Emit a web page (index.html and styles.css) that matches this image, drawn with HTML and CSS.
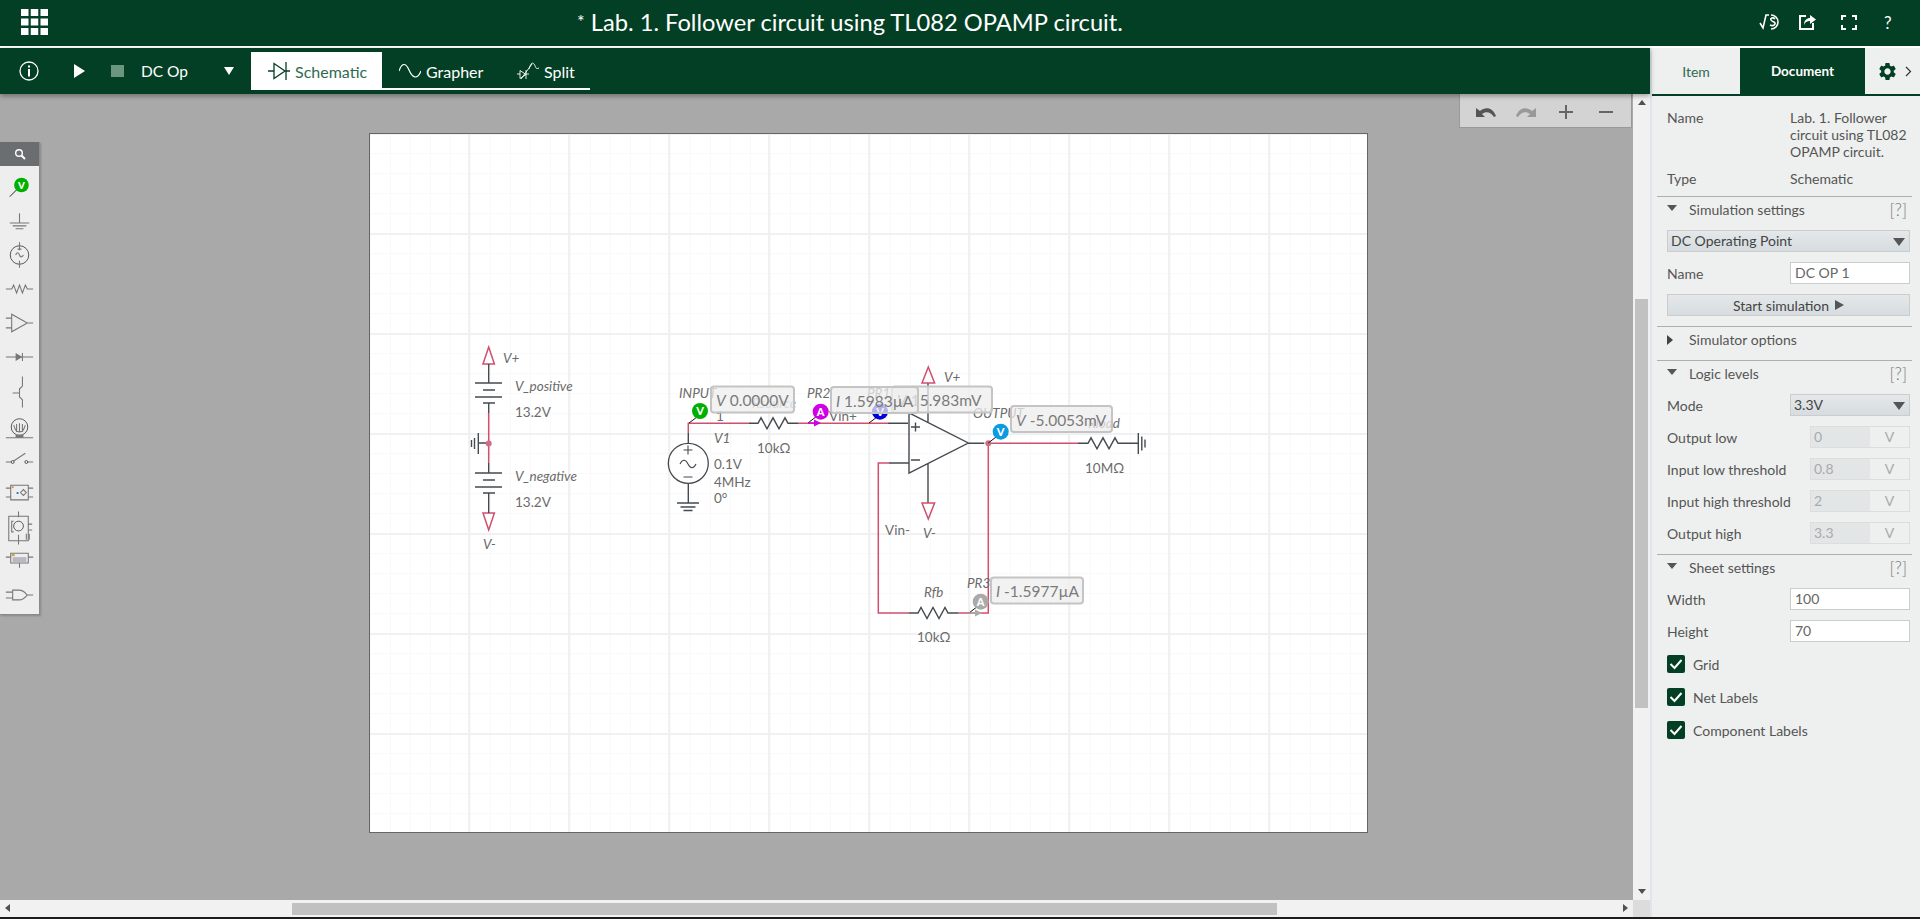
FILE: index.html
```html
<!DOCTYPE html>
<html lang="en">
<head>
<meta charset="utf-8">
<title>Lab. 1. Follower circuit using TL082 OPAMP circuit.</title>
<link rel="stylesheet" href="styles.css">
</head>
<body>
<div class="app">
  <header class="topbar">
    <svg class="apps" width="27" height="26" viewBox="0 0 27 26"><path fill="#fff" d="M0 0h7.500v7H0zM9.750 0h7.500v7h-7.500zM19.500 0H27v7h-7.500zM0 9.500h7.500v7H0zM9.750 9.500h7.500v7h-7.500zM19.500 9.500H27v7h-7.500zM0 19h7.500v7H0zM9.750 19h7.500v7h-7.500zM19.500 19H27v7h-7.500z"/></svg>
    <h1 class="title"><span class="star">*</span> Lab. 1. Follower circuit using TL082 OPAMP circuit.</h1>
    <div class="top-actions">
      <svg width="24" height="18" viewBox="0 0 24 18"><path class="ic-thin" d="M1 10l3 5 3-13h3"/><path class="ic-thin" d="M12 2a7 7 0 1 1 0 14M16 6c-2-2-5-1-4 1s5 2 4 4-3 2-5 1"/></svg>
      <svg width="17" height="16" viewBox="0 0 17 16"><path class="ic-line" d="M7 2H1v13h13V9"/><path fill="#fff" d="M5 11c0-5 3-7 6-7V1l6 4.500-6 4.500V7c-3 0-5 1-6 4z"/></svg>
      <svg width="16" height="15" viewBox="0 0 16 15"><path class="ic-line" d="M1 5V1h4M11 1h4v4M15 10v4h-4M5 14H1v-4"/></svg>
      <span class="help">?</span>
    </div>
  </header>
  <div class="body-row">
    <div class="left-col">
      <nav class="toolbar">
        <svg class="info" width="20" height="20" viewBox="0 0 20 20"><circle cx="10" cy="10" r="9" fill="none" stroke="#fff" stroke-width="1.300"/><path fill="#fff" d="M9 4.500h2v2H9zM9 8h2v7.500H9z"/></svg>
        <span class="play"></span>
        <span class="stop"></span>
        <span class="sim-name">DC Op</span>
        <span class="sim-drop"></span>
        <div class="tabs">
          <a class="tab active">
            <svg width="22" height="18" viewBox="0 0 22 18"><path fill="none" stroke="#033f24" stroke-width="1.300" d="M0 9h6M6 1.500l11 7.500-11 7.500zM18 0v18M18 9h4"/></svg>
            Schematic</a>
          <a class="tab grapher">
            <svg width="22" height="18" viewBox="0 0 22 18"><path fill="none" stroke="#fff" stroke-width="1.200" d="M0 9C3 0 7 1 10 8s8 11 12 1"/></svg>
            Grapher</a>
          <a class="tab split">
            <svg width="23" height="20" viewBox="0 0 23 20"><path fill="none" stroke="#fff" stroke-width=".9" d="M0 13h3M3 9.500l6 4-6 4zM9 9v9M9 13h3M4 18L15 3M12 8c2-6 3-7 5-5s1 6 5 4"/></svg>
            Split</a>
        </div>
      </nav>
      <div class="workspace">
        <main class="canvas">
          <div class="palette">
            <div class="palette-search">
              <svg width="12" height="12" viewBox="0 0 12 12"><circle cx="5" cy="5" r="3.300" fill="none" stroke="#fff" stroke-width="1.400"/><path stroke="#fff" stroke-width="2" d="M7.500 7.500L11 11"/></svg>
            </div>
            <svg class="pal-icon h36" viewBox="0 0 40 36"><path stroke="#222" d="M10 31l7-7"/><circle cx="22" cy="19" r="7.500" fill="#00b000"/><text class="pal-v" x="22" y="23">V</text></svg>
            <svg class="pal-icon h36" viewBox="0 0 40 36"><path class="pl" d="M20 11v10M10 21h20M13 24h14M16 27h8"/></svg>
            <svg class="pal-icon h34" viewBox="0 0 40 34"><circle class="pl2" cx="20" cy="17" r="9.500"/><path class="pl" d="M20 4v8M20 23v7M16 17c1.500-3 3-3 4 0s3 2 4 0M18 11h4"/></svg>
            <svg class="pal-icon h34" viewBox="0 0 40 34"><path class="pl" d="M6 17h6l2-4 3 8 3-8 3 8 3-8 2 4h6"/></svg>
            <svg class="pal-icon h34" viewBox="0 0 40 34"><path class="pl" d="M12 8v18l16-9zM6 12h6M6 22h6M28 17h6"/></svg>
            <svg class="pal-icon h34" viewBox="0 0 40 34"><path class="pl" d="M6 17h28M23 13v8"/><path fill="#777" d="M16 13l7 4-7 4z"/></svg>
            <svg class="pal-icon h36" viewBox="0 0 40 36"><path class="pl" d="M23 2v10l-3 3v8l3 3v8M20 14v10M13 19h7"/></svg>
            <svg class="pal-icon h36" viewBox="0 0 40 36"><circle class="pl2" cx="20" cy="17" r="8.500"/><path class="pl" d="M6 28h28M14 15c2 6 3 7 6 7s4-1 6-7M17 14v8M20 13v9M23 14v8"/><path fill="#777" d="M16 25h8v3h-8z"/></svg>
            <svg class="pal-icon h32" viewBox="0 0 40 32"><path class="pl" d="M6 16h6M28 16h6M14 15l12-8"/><circle class="pl2" cx="13" cy="16" r="1.500"/><circle class="pl2" cx="27" cy="16" r="1.500"/></svg>
            <svg class="pal-icon h32" viewBox="0 0 40 32"><path class="pl" d="M6 10h5M6 19h5M29 10h5M29 19h5M11 7h18v15H11zM21 14.500l3-3 3 3-3 3z"/><path fill="#c93" d="M12 8h2v2h-2z"/><path fill="#37c" d="M17 14h2v2h-2z"/></svg>
            <svg class="pal-icon h36" viewBox="0 0 40 36"><path class="pl" d="M9 6h20v25H9zM19 1v6M19 25v10M29 14h4M29 20h4M14 11h-2v11h2"/><circle class="pl2" cx="19" cy="16" r="5"/><path class="pl" d="M27 24v6M30 24v6"/></svg>
            <svg class="pal-icon h30" viewBox="0 0 40 30"><path class="pl" d="M6 11h5M29 11h5M11 7h18v10H11zM20 17v5"/><path fill="#b9b9c4" d="M13 11h14v5H13z"/><path fill="#c93" d="M12 8h3v2h-3z"/></svg>
            <svg class="pal-icon h40" viewBox="0 0 40 40"><path class="pl" d="M6 16h7M6 22h7M13 14v10h7c4 0 6-3 8-5-2-2-4-5-8-5zM28 19h6"/></svg>
          </div>
          <div class="edit-tools">
            <svg width="20" height="12" viewBox="0 0 20 12"><path fill="#555" d="M0 2v9h9L6 8c4-3 9-2 12 3l2-1C17 2 10 0 4 5z"/></svg>
            <svg width="20" height="12" viewBox="0 0 20 12"><path fill="#999" d="M20 2v9h-9l3-3C10 5 5 6 2 11l-2-1C3 2 10 0 16 5z"/></svg>
            <svg width="14" height="14" viewBox="0 0 14 14"><path fill="#666" d="M6 0h2v6h6v2H8v6H6V8H0V6h6z"/></svg>
            <svg width="14" height="14" viewBox="0 0 14 14"><path fill="#666" d="M0 6h14v2H0z"/></svg>
          </div>
          <div class="sheet">
            <svg class="schem" width="996" height="698" viewBox="370 134 996 698">
              <!-- supply -->
              <path class="red" d="M483 364l5.700-17 5.700 17zM488.700 413v50M483 513l5.700 17 5.700-17z"/>
              <path class="dk" d="M488.700 364v19M475 383h27M483 390h12M475 397h27M483 403h12M488.700 403v10M488.700 443h-10M478.300 433v21M474.500 438v11M471.500 440v7M488.700 463v10M475 473h27M483 480h12M475 487h27M483 493h12M488.700 493v20"/>
              <circle class="node" cx="488.700" cy="443.500" r="3"/>
              <text class="lb it" x="503" y="363">V+</text>
              <text class="lb it" x="515" y="391">V_positive</text>
              <text class="lb" x="515" y="417">13.2V</text>
              <text class="lb it" x="515" y="481">V_negative</text>
              <text class="lb" x="515" y="507">13.2V</text>
              <text class="lb it" x="483" y="549">V-</text>
              <!-- source -->
              <path class="red" d="M688.300 433v-9.700H749M798 423.300h90M889 463h-10.700v150H909M958 613h30.300V443.300H1078"/>
              <path class="dk" d="M688.300 433v10M688.300 483v20M677 503h22M680.500 507h15M683.500 510.500h9M749 423.300h9l3-5.500 6 11 6-11 6 11 6-11 3 5.500h10M888 423.300h20M909 413v60l59.300-30zM889 463h20M968.300 443.300h16M1078 443.300h10l3-5.500 6 11 6-11 6 11 6-11 3 5.500h10M1128 443.300h10M1138.300 433v21M1141.800 436.500v14M1145 439.500v8M909 613h9l3-5.500 6 11 6-11 6 11 6-11 3 5.500h10M928 383v40M928 463v40M911 427h9M915.500 422.500v9M911 460h9"/>
              <circle class="wirecirc" cx="688.300" cy="463.300" r="20"/>
              <path class="dkthin" d="M683.500 450h9M688 445.500v9M683.500 477h9M680 464c2.500-5 5.500-5 8 0s5.500 5 8 0"/>
              <path class="red" d="M922 383l6.300-16 6.300 16zM922 503l6.300 16 6.300-16z"/>
              <circle class="node" cx="988.300" cy="443.300" r="3"/>
              <!-- labels -->
              <text class="lb it" x="679" y="398">INPUT</text>
              <text class="lb faint it" x="752" y="408">Rsource</text>
              <text class="lb" x="716" y="421">1</text>
              <text class="lb it" x="714" y="443">V1</text>
              <text class="lb" x="714" y="469">0.1V</text>
              <text class="lb" x="714" y="487">4MHz</text>
              <text class="lb" x="714" y="503">0°</text>
              <text class="lb" x="757" y="453">10kΩ</text>
              <text class="lb it" x="807" y="398">PR2</text>
              <text class="lb" x="829" y="421">Vin+</text>
              <text class="lb it" x="867" y="398">PR1</text>
              <text class="lb it" x="944" y="382">V+</text>
              <text class="lb it" x="923" y="538">V-</text>
              <text class="lb" x="885" y="535">Vin-</text>
              <text class="lb it" x="973" y="418">OUTPUT</text>
              <text class="lb it" x="1088" y="428">Rload</text>
              <text class="lb" x="1085" y="473">10MΩ</text>
              <text class="lb it" x="967" y="588">PR3</text>
              <text class="lb it" x="924" y="597">Rfb</text>
              <text class="lb" x="917" y="642">10kΩ</text>
              <!-- probes -->
              <path class="stem" d="M689 423l8-6M808 423l9-7M869 423l8-6M988.300 443l9-7M969 613l9-7"/>
              <path class="arrow-m" d="M808 423h8"/><path class="arrow-mf" d="M814 419.500l7 3.500-7 3.500z"/>
              <path class="arrow-g" d="M969 613h8"/><path class="arrow-gf" d="M975 609.500l7 3.500-7 3.500z"/>
              <circle class="p-green" cx="700" cy="411" r="8"/><text class="pv" x="700" y="415">V</text>
              <circle class="p-mag" cx="820.700" cy="411.700" r="8"/><text class="pv" x="820.700" y="416">A</text>
              <circle class="p-blue" cx="880" cy="411.700" r="8"/><text class="pv" x="880" y="416">V</text>
              <circle class="p-sky" cx="1000.700" cy="431.700" r="8"/><text class="pv" x="1000.700" y="436">V</text>
              <circle class="p-gray" cx="980.700" cy="601.700" r="8"/><text class="pv" x="980.700" y="606">A</text>
              <!-- value boxes -->
              <rect class="vbox" x="711" y="386.500" width="83" height="26" rx="3"/>
              <text class="vt" x="716" y="406"><tspan class="it">V</tspan> 0.0000V</text>
              <rect class="vbox" x="892" y="386.500" width="100" height="26" rx="3"/>
              <text class="vt" x="897" y="406"><tspan class="it">V</tspan> 15.983mV</text>
              <rect class="vbox" x="831" y="387" width="87" height="26" rx="3"/>
              <text class="vt" x="836" y="407"><tspan class="it">I</tspan> 1.5983µA</text>
              <rect class="vbox" x="1011" y="406" width="101" height="26" rx="3"/>
              <text class="vt" x="1016" y="426"><tspan class="it">V</tspan> -5.0053mV</text>
              <rect class="vbox" x="991" y="577.500" width="92" height="26" rx="3"/>
              <text class="vt" x="996" y="597"><tspan class="it">I</tspan> -1.5977µA</text>
            </svg>
          </div>
        </main>
        <div class="vscroll">
          <span class="arr up"></span>
          <span class="vthumb"></span>
          <span class="arr down"></span>
        </div>
        <div class="hscroll">
          <span class="arr left"></span>
          <span class="hthumb"></span>
          <span class="arr right"></span>
        </div>
        <div class="corner"></div>
      </div>
    </div>
    <aside class="panel">
      <div class="panel-tabs">
        <a class="ptab item">Item</a>
        <a class="ptab doc">Document</a>
        <div class="ptab-tools">
          <svg width="21" height="21" viewBox="0 0 24 24"><path fill="#033f24" d="M19.140 12.940c.04-.3.06-.61.06-.94 0-.32-.02-.64-.07-.94l2.030-1.580a.49.49 0 0 0 .12-.61l-1.920-3.320a.488.488 0 0 0-.59-.22l-2.390.96c-.5-.38-1.030-.7-1.620-.94l-.36-2.540a.484.484 0 0 0-.48-.41h-3.840c-.24 0-.43.17-.47.41l-.36 2.540c-.59.24-1.130.57-1.620.94l-2.390-.96c-.22-.08-.47 0-.59.22L2.740 8.870c-.12.21-.08.47.12.61l2.030 1.580c-.05.3-.09.63-.09.94s.02.64.07.94l-2.030 1.580a.49.49 0 0 0-.12.61l1.920 3.320c.12.22.37.29.59.22l2.390-.96c.5.38 1.030.7 1.620.94l.36 2.540c.05.24.24.41.48.41h3.840c.24 0 .44-.17.47-.41l.36-2.540c.59-.24 1.130-.56 1.620-.94l2.390.96c.22.08.47 0 .59-.22l1.920-3.320c.12-.22.07-.47-.12-.61l-2.010-1.580zM12 15.600c-1.980 0-3.600-1.620-3.600-3.600s1.620-3.600 3.600-3.600 3.600 1.620 3.600 3.600-1.620 3.600-3.600 3.600z"/></svg>
          <svg width="7" height="11" viewBox="0 0 7 11"><path fill="none" stroke="#333" stroke-width="1.200" d="M1 1l4.500 4.500L1 10"/></svg>
        </div>
      </div>
      <div class="panel-body">
        <dl class="meta">
          <dt>Name</dt><dd>Lab. 1. Follower circuit using TL082 OPAMP circuit.</dd>
          <dt>Type</dt><dd>Schematic</dd>
        </dl>
        <section class="sec">
          <h2 class="sec-head"><span class="tri-down"></span>Simulation settings<span class="hint">[?]</span></h2>
          <div class="select wide">DC Operating Point<span class="sel-arrow"></span></div>
          <div class="row"><label>Name</label><div class="input">DC OP 1</div></div>
          <div class="btn">Start simulation<span class="btn-play"></span></div>
        </section>
        <section class="sec">
          <h2 class="sec-head"><span class="tri-right"></span>Simulator options</h2>
        </section>
        <section class="sec">
          <h2 class="sec-head"><span class="tri-down"></span>Logic levels<span class="hint">[?]</span></h2>
          <div class="row"><label>Mode</label><div class="select">3.3V<span class="sel-arrow"></span></div></div>
          <div class="row"><label>Output low</label><div class="unit"><span class="uv">0</span><span class="uu">V</span></div></div>
          <div class="row"><label>Input low threshold</label><div class="unit"><span class="uv">0.8</span><span class="uu">V</span></div></div>
          <div class="row"><label>Input high threshold</label><div class="unit"><span class="uv">2</span><span class="uu">V</span></div></div>
          <div class="row"><label>Output high</label><div class="unit"><span class="uv">3.3</span><span class="uu">V</span></div></div>
        </section>
        <section class="sec">
          <h2 class="sec-head"><span class="tri-down"></span>Sheet settings<span class="hint">[?]</span></h2>
          <div class="row"><label>Width</label><div class="input">100</div></div>
          <div class="row"><label>Height</label><div class="input">70</div></div>
          <div class="check first"><span class="box"><svg width="18" height="18" viewBox="0 0 18 18"><path fill="none" stroke="#fff" stroke-width="2" d="M3.500 9l4 4 7-8"/></svg></span>Grid</div>
          <div class="check"><span class="box"><svg width="18" height="18" viewBox="0 0 18 18"><path fill="none" stroke="#fff" stroke-width="2" d="M3.500 9l4 4 7-8"/></svg></span>Net Labels</div>
          <div class="check"><span class="box"><svg width="18" height="18" viewBox="0 0 18 18"><path fill="none" stroke="#fff" stroke-width="2" d="M3.500 9l4 4 7-8"/></svg></span>Component Labels</div>
        </section>
      </div>
    </aside>
  </div>
  <div class="bottom-line"></div>
</div>
</body>
</html>
```
FILE: styles.css
```css
* { box-sizing: border-box; }
html, body { margin: 0; height: 100%; overflow: hidden; }
body { font-family: Lato, "Open Sans", sans-serif; color: #555; background: #a9a9a9; }
.app { display: flex; flex-direction: column; height: 919px; }

.topbar { flex: 0 0 48px; height: 48px; background: #033f24; border-bottom: 2px solid #fff; display: flex; align-items: center; padding-left: 21px; }
.apps { flex: none; margin-top: -2px; }
.title { flex: 1; margin: -3px 107px 0 0; text-align: center; color: #fff; font-size: 23.700px; font-weight: 400; white-space: nowrap; }
.star { font-size: 18px; vertical-align: 3px; }
.top-actions { display: flex; align-items: center; padding-right: 28px; margin-top: -2px; }
.top-actions svg:nth-child(1) { margin-right: 16px; }
.top-actions svg:nth-child(2) { margin-right: 25px; }
.top-actions svg:nth-child(3) { margin-right: 27px; }
.ic-line { fill: none; stroke: #fff; stroke-width: 2; }
.ic-thin { fill: none; stroke: #fff; stroke-width: 1.600; }
.help { color: #fff; font-size: 17px; width: 8px; }

.body-row { flex: 1; display: flex; min-height: 0; }
.left-col { flex: 1; display: flex; flex-direction: column; min-width: 0; }

.toolbar { flex: 0 0 46px; background: #033f24; display: flex; align-items: center; padding-left: 19px; position: relative; z-index: 2; box-shadow: 0 2px 5px rgba(0,0,0,.35); }
.info { flex: none; margin-right: 35px; }
.play { width: 0; height: 0; border-left: 11px solid #fff; border-top: 7px solid transparent; border-bottom: 7px solid transparent; margin-right: 26px; }
.stop { width: 13px; height: 12px; background: #6c9580; margin-right: 17px; }
.sim-name { color: #fff; font-size: 15.500px; width: 83px; }
.sim-drop { width: 0; height: 0; border-top: 8px solid #fff; border-left: 5.500px solid transparent; border-right: 5.500px solid transparent; margin-right: 17px; }
.tabs { display: flex; align-self: flex-start; height: 38px; margin-top: 4px; border-bottom: 2px solid #fff; width: 339px; }
.tab { display: flex; align-items: center; gap: 5px; color: #fff; font-size: 16px; height: 38px; padding-left: 17px; }
.tab.active { background: #fff; color: #2f6b52; width: 131px; }
.tab.grapher { width: 118px; }
.tab.split { width: 90px; gap: 4px; }

.workspace { flex: 1; display: grid; grid-template-columns: 1633px 17px; grid-template-rows: 806px 17px; min-height: 0; }
.canvas { position: relative; background: #a9a9a9; overflow: hidden; padding: 40px 0 0 370px; }
.sheet { width: 997px; height: 698px; background-color: #fff; box-shadow: 0 0 0 1px #666;
  background-image: linear-gradient(#f1f1f1 2px, transparent 2px), linear-gradient(90deg, #f1f1f1 2px, transparent 2px), linear-gradient(#f9f9f9 1px, transparent 1px), linear-gradient(90deg, #f9f9f9 1px, transparent 1px);
  background-size: 100px 100px, 100px 100px, 20px 20px, 20px 20px;
  background-position: 0 -1px, -2px 0, 0 -1px, 0 -1px; }
.schem { display: block; }

.palette { position: absolute; left: 0; top: 48px; width: 40px; height: 473px; background: #eee; border-right: 1px solid #8a8a8a; border-bottom: 1px solid #8a8a8a; box-shadow: 1px 1px 2px rgba(0,0,0,.2); display: flex; flex-direction: column; z-index: 1; }
.palette-search { height: 24px; flex: none; background: #6b6e71; display: flex; align-items: center; justify-content: center; }
.pal-icon { width: 39px; flex: none; display: block; }
.h30 { height: 30px; } .h32 { height: 32px; } .h34 { height: 34px; } .h36 { height: 36px; } .h40 { height: 40px; }
.pl { fill: none; stroke: #777; stroke-width: 1.100; }
.pl2 { fill: none; stroke: #555; stroke-width: 1; }
.pal-v { fill: #fff; font-size: 10px; font-weight: 900; text-anchor: middle; }

.edit-tools { position: absolute; top: 0; left: 1459px; width: 173px; height: 34px; background: #d3d3d3; border: 1px solid #999; border-top: 0; display: flex; align-items: center; padding: 2px 0 0 16px; }
.edit-tools svg:nth-child(1) { margin-right: 20px; }
.edit-tools svg:nth-child(2) { margin-right: 23px; }
.edit-tools svg:nth-child(3) { margin-right: 26px; }

.red { fill: none; stroke: #cf4f6c; stroke-width: 1.500; }
.dk { fill: none; stroke: #454a50; stroke-width: 1.400; }
.dkthin { fill: none; stroke: #454a50; stroke-width: 1.100; }
.wirecirc { fill: none; stroke: #454a50; stroke-width: 1.300; }
.node { fill: #cf6f84; }
.lb { font-size: 13.500px; fill: #6b6b6b; }
.it { font-style: italic; }
.faint { fill: #9a9a9a; }
.stem { fill: none; stroke: #111; stroke-width: 1; }
.arrow-m { stroke: #d000e0; stroke-width: 1.500; }
.arrow-mf { fill: #d000e0; }
.arrow-g { stroke: #aaa; stroke-width: 1.500; }
.arrow-gf { fill: #aaa; }
.p-green { fill: #00b000; } .p-mag { fill: #d000e6; } .p-blue { fill: #0000e0; } .p-sky { fill: #0a9be0; } .p-gray { fill: #aaa; }
.pv { fill: #fff; font-size: 11px; font-weight: 900; text-anchor: middle; }
.vbox { fill: rgba(238,238,238,.75); stroke: #c4c4c4; stroke-width: 2; }
.vt { fill: #7b7b7b; font-size: 15.500px; }

.vscroll { background: #f1f1f1; position: relative; padding-top: 205px; }
.vthumb { display: block; width: 13px; margin-left: 2px; height: 409px; background: #c1c1c1; }
.hscroll { background: #f1f1f1; position: relative; padding: 3px 0 0 292px; }
.hthumb { display: block; width: 985px; height: 12px; background: #c1c1c1; }
.corner { background: #dcdcdc; }
.arr { position: absolute; width: 0; height: 0; }
.arr.up { top: 6px; left: 5px; border-bottom: 5px solid #505050; border-left: 4px solid transparent; border-right: 4px solid transparent; }
.arr.down { bottom: 6px; left: 5px; border-top: 5px solid #505050; border-left: 4px solid transparent; border-right: 4px solid transparent; }
.arr.left { left: 5px; top: 4px; border-right: 5px solid #505050; border-top: 4px solid transparent; border-bottom: 4px solid transparent; }
.arr.right { right: 5px; top: 4px; border-left: 5px solid #505050; border-top: 4px solid transparent; border-bottom: 4px solid transparent; }

.bottom-line { flex: 0 0 2px; background: #1c1c1c; }

.panel { flex: 0 0 270px; width: 270px; background: #eef0ef; border-left: 2px solid #dfe5e9; display: flex; flex-direction: column; font-size: 14px; }
.panel-tabs { flex: 0 0 48px; display: flex; border-bottom: 2px solid #033f24; }
.ptab { display: flex; align-items: center; justify-content: center; font-size: 14px; height: 46px; }
.item { width: 88px; color: #2f6b52; }
.doc { width: 125px; background: #033f24; color: #fff; font-weight: 700; font-size: 13.500px; }
.ptab-tools { display: flex; align-items: center; padding-left: 12px; gap: 7px; height: 46px; }

.panel-body { padding: 13px 8px 0 5px; }
.meta { margin: 0 0 9px 10px; display: grid; grid-template-columns: 123px 122px; row-gap: 10px; line-height: 17px; }
.meta dt, .meta dd { margin: 0; }

.sec { border-top: 1px solid #aeb0b0; }
.sec-head { margin: 0 0 10px; height: 23px; display: flex; align-items: center; font-size: 14px; font-weight: 400; padding: 2px 5px 0 10px; }
.tri-down { width: 0; height: 0; border-top: 6px solid #555; border-left: 5px solid transparent; border-right: 5px solid transparent; margin: -3px 12px 0 0; }
.tri-right { width: 0; height: 0; border-left: 6px solid #444; border-top: 5px solid transparent; border-bottom: 5px solid transparent; margin-right: 16px; }
.hint { margin-left: auto; font-size: 17px; color: #777; font-weight: 300; }
.row { display: flex; align-items: center; height: 22px; margin: 0 0 10px 10px; }
.row label { width: 123px; flex: none; white-space: nowrap; }
.select { position: relative; width: 120px; height: 22px; border: 1px solid #ccc; background: linear-gradient(#e4e8ea, #d6dcdf); padding-left: 3px; line-height: 20px; font-size: 14px; color: #444; }
.select.wide { width: 243px; margin: 0 0 10px 10px; }
.sel-arrow { position: absolute; right: 4px; top: 7px; width: 0; height: 0; border-top: 8px solid #555; border-left: 6px solid transparent; border-right: 6px solid transparent; }
.input { width: 120px; height: 22px; background: #fff; border: 1px solid #ccc; padding-left: 4px; line-height: 20px; color: #666; }
.btn { margin: 0 0 10px 10px; width: 243px; height: 22px; border: 1px solid #ccc; background: linear-gradient(#e4e8ea, #d6dcdf); display: flex; align-items: center; justify-content: center; color: #444; }
.btn-play { margin-left: 6px; width: 0; height: 0; border-left: 9px solid #555; border-top: 5px solid transparent; border-bottom: 5px solid transparent; }
.unit { margin-left: 20px; width: 100px; height: 22px; border: 1px solid #ddd; display: flex; color: #aaa; line-height: 20px; }
.uv { width: 59px; background: #e2e6e7; padding-left: 3px; }
.uu { flex: 1; text-align: center; font-size: 14px; }
.check { display: flex; align-items: center; height: 18px; margin: 0 0 15px 10px; }
.check.first { margin-top: 13px; }
.box { width: 18px; height: 18px; background: #033f24; border-radius: 2px; margin-right: 8px; }
.box svg { display: block; }
```
